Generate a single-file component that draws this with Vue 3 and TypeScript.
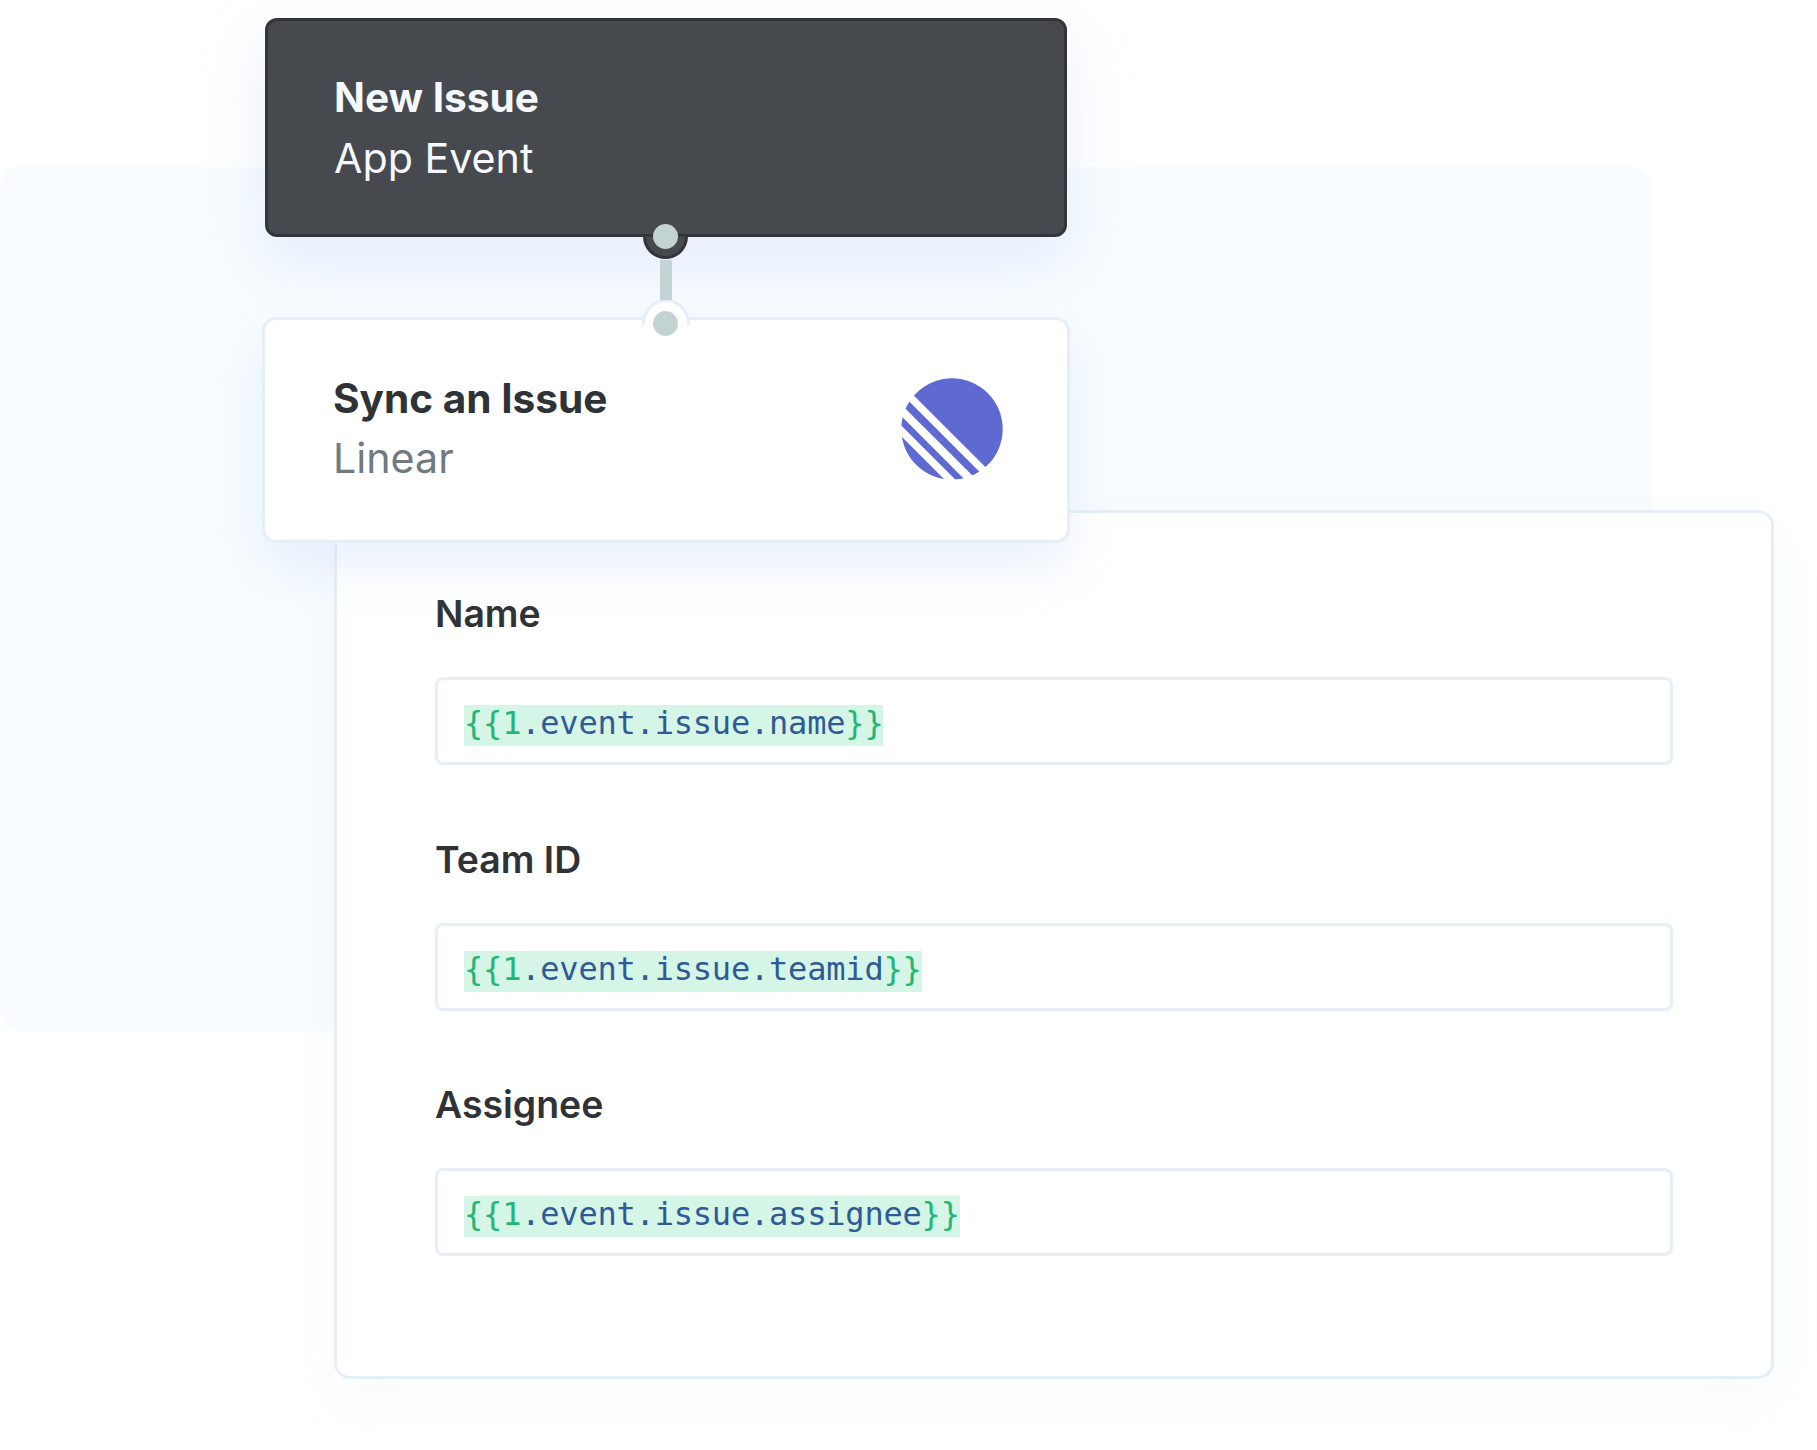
<script setup lang="ts">
interface Field {
  label: string
  path: string
}

const fields: Field[] = [
  { label: 'Name', path: 'name' },
  { label: 'Team ID', path: 'teamid' },
  { label: 'Assignee', path: 'assignee' },
]
</script>

<template>
  <div class="stage">
    <div class="backdrop" />

    <div class="node node-dark">
      <div class="node-title">New Issue</div>
      <div class="node-sub">App Event</div>
      <span class="socket-out" />
      <span class="dot dot-out" />
    </div>

    <div class="wire" />

    <div class="node node-light">
      <span class="socket-in" />
      <span class="dot dot-in" />
      <div>
        <div class="node-title">Sync an Issue</div>
        <div class="node-sub">Linear</div>
      </div>
      <svg class="logo" viewBox="-51 -51 102 102" aria-hidden="true">
        <circle r="50.7" fill="#5e6ad2" />
        <g stroke="#fff" fill="none">
          <line x1="-85" y1="-75" x2="75" y2="85" stroke-width="7.5" />
          <line x1="-96" y1="-64" x2="64" y2="96" stroke-width="8.3" />
          <line x1="-106.3" y1="-53.7" x2="53.7" y2="106.3" stroke-width="7.6" />
        </g>
      </svg>
    </div>

    <div class="panel">
      <div v-for="field in fields" :key="field.label" class="field">
        <div class="field-label">{{ field.label }}</div>
        <div class="field-input">
          <span class="chip"><span class="brace">&#123;&#123;1</span>.event.issue.{{ field.path }}<span class="brace">&#125;&#125;</span></span>
        </div>
      </div>
    </div>
  </div>
</template>

<style scoped>
.stage {
  position: relative;
  width: 1817px;
  height: 1450px;
  padding-top: 18px;
  box-sizing: border-box;
  overflow: hidden;
  background: #fff;
  font-family: Inter, "Noto Sans", sans-serif;
}

.backdrop {
  position: absolute;
  left: 0;
  top: 167px;
  width: 1652px;
  height: 864px;
  border-radius: 20px;
  background: #f8fcff;
}

.node {
  position: relative;
  box-sizing: border-box;
  display: flex;
  z-index: 2;
}

.node-dark {
  flex-direction: column;
  justify-content: center;
  width: 802px;
  height: 219px;
  margin-left: 265px;
  padding: 1px 0 0 66px;
  border: 3px solid #333639;
  border-radius: 12px;
  background: #46494d;
  color: #f5f9fd;
  box-shadow: 0 26px 60px rgba(190, 212, 245, 0.36);
}

.node-title {
  font-size: 40.6px;
  line-height: 60px;
  font-weight: 700;
}

.node-sub {
  font-size: 41.2px;
  line-height: 60px;
  font-weight: 400;
}

.socket-out {
  position: absolute;
  left: 375px;
  bottom: -25px;
  box-sizing: border-box;
  width: 45px;
  height: 45px;
  border: 3px solid #333639;
  border-radius: 50%;
  background: #46494d;
  clip-path: inset(50% 0 0 0);
}

.dot {
  position: absolute;
  width: 25px;
  height: 25px;
  border-radius: 50%;
  background: #c3d3d4;
}

.dot-out {
  left: 385px;
  bottom: -15px;
}

.wire {
  position: relative;
  z-index: 3;
  width: 12px;
  height: 40px;
  margin: 23px 0 17px 660px;
  background: #c3d3d4;
}

.node-light {
  align-items: center;
  justify-content: space-between;
  width: 808px;
  height: 226px;
  margin-left: 262px;
  padding: 0 64px 3px 68px;
  border: 3px solid #e6eefa;
  border-radius: 14px;
  background: #fff;
  color: #303336;
  box-shadow: 0 26px 50px rgba(190, 212, 245, 0.3);
}

.node-light .node-sub {
  margin-top: -1px;
  color: #6f7a81;
}

.socket-in {
  position: absolute;
  left: 377px;
  top: -21px;
  box-sizing: border-box;
  width: 48px;
  height: 48px;
  border: 3px solid #e6eefa;
  border-radius: 50%;
  background: #fff;
  clip-path: inset(0 0 22px 0);
}

.dot-in {
  left: 388px;
  top: -9px;
}

.logo {
  width: 102px;
  height: 102px;
}

.panel {
  position: relative;
  z-index: 1;
  box-sizing: border-box;
  display: flex;
  flex-direction: column;
  width: 1440px;
  height: 869px;
  margin: -33px 0 0 334px;
  padding: 79px 98px 0 98px;
  border: 3px solid #e6eefa;
  border-radius: 16px;
  background: #fff;
  box-shadow: 0 20px 50px rgba(200, 220, 250, 0.1);
}

.field {
  height: 245.5px;
}

.field-label {
  height: 85px;
  box-sizing: border-box;
  font-size: 37.4px;
  line-height: 44px;
  font-weight: 600;
  color: #303336;
}

.field-input {
  box-sizing: border-box;
  display: flex;
  align-items: center;
  height: 88px;
  padding: 9px 0 0 26px;
  border: 3px solid #e6eefa;
  border-radius: 8px;
  background: #fff;
}

.chip {
  display: block;
  height: 41px;
  font-family: "DejaVu Sans Mono", monospace;
  font-size: 32px;
  line-height: 37px;
  letter-spacing: -0.2px;
  white-space: nowrap;
  color: #2f5a96;
  background: #d5f5e6;
}

.brace {
  color: #22b573;
}
</style>
